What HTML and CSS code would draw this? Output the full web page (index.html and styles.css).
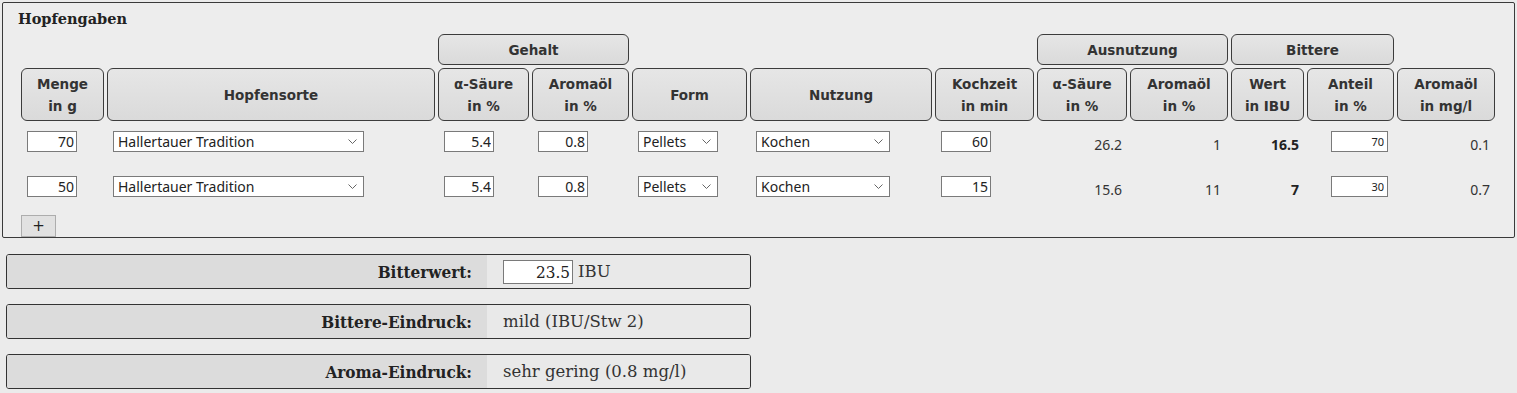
FILE: index.html
```html
<!DOCTYPE html>
<html>
    <head>
      <meta charset="utf-8">
      <title>Hopfengaben</title>
      <link rel="stylesheet" href="styles.css">
    </head>
    <body>
        <div class="box">
            <div class="box-title">Hopfengaben</div>
            <table class="hops">
                <tr class="groups">
                    <td colspan="2"></td>
                    <th colspan="2">Gehalt</th>
                    <td colspan="3"></td>
                    <th colspan="2">Ausnutzung</th>
                    <th colspan="2">Bittere</th>
                    <td></td>
                </tr>
                <tr class="heads">
                    <th class="c-menge">Menge<br>in g</th>
                    <th class="c-sorte">Hopfensorte</th>
                    <th class="c-alpha">α-Säure<br>in %</th>
                    <th class="c-oel">Aromaöl<br>in %</th>
                    <th class="c-form">Form</th>
                    <th class="c-nutz">Nutzung</th>
                    <th class="c-koch">Kochzeit<br>in min</th>
                    <th class="c-aalpha">α-Säure<br>in %</th>
                    <th class="c-aoel">Aromaöl<br>in %</th>
                    <th class="c-wert">Wert<br>in IBU</th>
                    <th class="c-anteil">Anteil<br>in %</th>
                    <th class="c-mgl">Aromaöl<br>in mg/l</th>
                </tr>
                <tr class="hop">
                    <td><input class="num" value="70"></td>
                    <td>
                        <span class="select wide">
                            <select><option>Hallertauer Tradition</option></select>
                            <svg width="9" height="5" viewBox="0 0 9 5"><path d="M0.5 0.5 L4.5 4.5 L8.5 0.5" fill="none" stroke="#666" stroke-width="1"/></svg>
                        </span>
                    </td>
                    <td><input class="num" value="5.4"></td>
                    <td><input class="num" value="0.8"></td>
                    <td>
                        <span class="select small">
                            <select><option>Pellets</option></select>
                            <svg width="9" height="5" viewBox="0 0 9 5"><path d="M0.5 0.5 L4.5 4.5 L8.5 0.5" fill="none" stroke="#666" stroke-width="1"/></svg>
                        </span>
                    </td>
                    <td>
                        <span class="select mid">
                            <select><option>Kochen</option></select>
                            <svg width="9" height="5" viewBox="0 0 9 5"><path d="M0.5 0.5 L4.5 4.5 L8.5 0.5" fill="none" stroke="#666" stroke-width="1"/></svg>
                        </span>
                    </td>
                    <td><input class="num" value="60"></td>
                    <td class="calc">26.2</td>
                    <td class="calc wide-pad">1</td>
                    <td class="calc strong">16.5</td>
                    <td class="anteil"><input class="num tiny" value="70"></td>
                    <td class="calc">0.1</td>
                </tr>
                <tr class="hop">
                    <td><input class="num" value="50"></td>
                    <td>
                        <span class="select wide">
                            <select><option>Hallertauer Tradition</option></select>
                            <svg width="9" height="5" viewBox="0 0 9 5"><path d="M0.5 0.5 L4.5 4.5 L8.5 0.5" fill="none" stroke="#666" stroke-width="1"/></svg>
                        </span>
                    </td>
                    <td><input class="num" value="5.4"></td>
                    <td><input class="num" value="0.8"></td>
                    <td>
                        <span class="select small">
                            <select><option>Pellets</option></select>
                            <svg width="9" height="5" viewBox="0 0 9 5"><path d="M0.5 0.5 L4.5 4.5 L8.5 0.5" fill="none" stroke="#666" stroke-width="1"/></svg>
                        </span>
                    </td>
                    <td>
                        <span class="select mid">
                            <select><option>Kochen</option></select>
                            <svg width="9" height="5" viewBox="0 0 9 5"><path d="M0.5 0.5 L4.5 4.5 L8.5 0.5" fill="none" stroke="#666" stroke-width="1"/></svg>
                        </span>
                    </td>
                    <td><input class="num" value="15"></td>
                    <td class="calc">15.6</td>
                    <td class="calc wide-pad">11</td>
                    <td class="calc strong">7</td>
                    <td class="anteil"><input class="num tiny" value="30"></td>
                    <td class="calc">0.7</td>
                </tr>
            </table>
            <button class="add">+</button>
        </div>

        <div class="result">
            <div class="result-label">Bitterwert:</div>
            <div class="result-value"><input class="ibu" value="23.5"> IBU</div>
        </div>
        <div class="result">
            <div class="result-label">Bittere-Eindruck:</div>
            <div class="result-value">mild (IBU/Stw 2)</div>
        </div>
        <div class="result">
            <div class="result-label">Aroma-Eindruck:</div>
            <div class="result-value">sehr gering (0.8 mg/l)</div>
        </div>
    </body>
</html>
```

FILE: styles.css
```css
body{
    margin: 2px;
    background: #ebebeb;
    color: #333;
    font-family: "Noto Sans", sans-serif;
    font-size: 14px;
}
.box{
    border: 1px solid #3a3a3a;
    border-radius: 2px;
    padding: 7px 15px 0 15px;
    background: #ededed;
}
.box-title{
    font-family: "DejaVu Serif", serif;
    font-weight: bold;
    font-size: 14.5px;
    color: #222;
    height: 21px;
    line-height: 18px;
}
.hops{
    border-spacing: 3px;
}
.hops th{
    box-sizing: border-box;
    border: 1px solid #3c3c3c;
    border-radius: 6px;
    background: linear-gradient(#e6e6e6, #dadada);
    font-family: "DejaVu Sans", sans-serif;
    font-size: 13.5px;
    font-weight: bold;
    color: #333;
    padding: 0;
}
.groups th{
    height: 31px;
}
.heads th{
    height: 53px;
    line-height: 22px;
}
.c-menge{ width: 83px; }
.c-sorte{ width: 328px; }
.c-alpha{ width: 91px; }
.c-oel{ width: 97px; }
.c-form{ width: 115px; }
.c-nutz{ width: 182px; }
.c-koch{ width: 99px; }
.c-aalpha{ width: 90px; }
.c-aoel{ width: 98px; }
.c-wert{ width: 73px; }
.c-anteil{ width: 87px; }
.c-mgl{ width: 98px; }

.hop td{
    height: 42px;
    box-sizing: border-box;
    padding: 7px 0 0 6px;
    vertical-align: top;
    line-height: 21px;
}
.hop td.calc{
    text-align: right;
    padding: 10px 5px 0 0;
    color: #333;
}
.hop td.wide-pad{
    padding-right: 7px;
}
.hop td.strong{
    font-weight: bold;
    color: #222;
}
.hop td.anteil{
    padding-left: 24px;
}
input{
    box-sizing: border-box;
    height: 21px;
    border: 1px solid #7a7a7a;
    background: #fff;
    font-family: "Noto Sans", sans-serif;
    font-size: 14px;
    color: #222;
    padding: 0 2px;
    margin: 0;
    vertical-align: top;
}
input.num{
    width: 50px;
    text-align: right;
}
input.tiny{
    width: 57px;
    font-size: 11px;
    padding-right: 3px;
}
.select{
    box-sizing: border-box;
    display: inline-flex;
    align-items: center;
    height: 21px;
    border: 1px solid #7a7a7a;
    background: #fff;
    vertical-align: top;
}
.select select{
    appearance: none;
    border: none;
    background: transparent;
    flex: 1;
    min-width: 0;
    font-family: "Noto Sans", sans-serif;
    font-size: 14px;
    color: #222;
    padding: 0 0 0 4px;
    height: 19px;
}
.select svg{
    margin-right: 6px;
    flex: none;
}
.select.wide{ width: 251px; }
.select.small{ width: 80px; }
.select.mid{ width: 134px; }

.add{
    display: block;
    box-sizing: border-box;
    width: 35px;
    height: 22px;
    margin: 1px 0 0 3px;
    border: 1px solid #adadad;
    background: #e1e1e1;
    font-size: 15px;
    font-family: "DejaVu Sans", sans-serif;
    line-height: 18px;
    color: #222;
    padding: 0;
}

.result{
    display: flex;
    width: 745px;
    height: 35px;
    box-sizing: border-box;
    border: 1px solid #333;
    border-radius: 3px;
    margin: 15px 0 0 4px;
    overflow: hidden;
}
.box + .result{
    margin-top: 16px;
}
.result-label{
    width: 480px;
    background: #dcdcdc;
    padding-right: 15px;
    box-sizing: border-box;
    font-family: "DejaVu Serif Condensed", "DejaVu Serif", serif;
    font-stretch: condensed;
    font-weight: bold;
    font-size: 17px;
    color: #222;
    display: flex;
    align-items: center;
    justify-content: flex-end;
}
.result-value{
    flex: 1;
    background: #e9e9e9;
    padding-left: 16px;
    font-family: "DejaVu Serif", serif;
    font-size: 16.5px;
    color: #333;
    display: flex;
    align-items: center;
    gap: 5px;
}
input.ibu{
    width: 70px;
    height: 24px;
    text-align: right;
    font-family: "DejaVu Serif Condensed", "DejaVu Serif", serif;
    font-stretch: condensed;
    font-size: 17px;
    color: #222;
}
```
